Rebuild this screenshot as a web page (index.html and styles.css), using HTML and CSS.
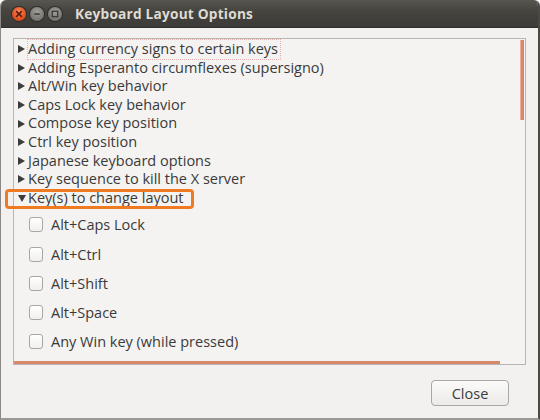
FILE: index.html
```html
<!DOCTYPE html>
<html>
<head>
<meta charset="utf-8">
<link rel="stylesheet" href="styles.css">
</head>
<body>
<div class="window">
  <div class="titlebar">
    <div class="wbtns">
      <span class="wbtn close"><svg width="14" height="14" viewBox="0 0 14 14"><path d="M4.6 4.6 L9.4 9.4 M9.4 4.6 L4.6 9.4" stroke="#5a1a0c" stroke-width="1.6" stroke-linecap="round"/></svg></span>
      <span class="wbtn min"><svg width="14" height="14" viewBox="0 0 14 14"><path d="M4.3 7 H9.7" stroke="#3a3935" stroke-width="1.6"/></svg></span>
      <span class="wbtn max"><svg width="14" height="14" viewBox="0 0 14 14"><rect x="4.3" y="4.3" width="5.4" height="5.4" fill="none" stroke="#3a3935" stroke-width="1.3"/></svg></span>
    </div>
    <div class="title">Keyboard Layout Options</div>
  </div>
  <div class="content">
    <div class="panel">
      <ul class="tree">
        <li class="row focus"><span class="tri"></span><span class="lbl">Adding currency signs to certain keys</span></li>
        <li class="row"><span class="tri"></span>Adding Esperanto circumflexes (supersigno)</li>
        <li class="row"><span class="tri"></span>Alt/Win key behavior</li>
        <li class="row"><span class="tri"></span>Caps Lock key behavior</li>
        <li class="row"><span class="tri"></span>Compose key position</li>
        <li class="row"><span class="tri"></span>Ctrl key position</li>
        <li class="row"><span class="tri"></span>Japanese keyboard options</li>
        <li class="row"><span class="tri"></span>Key sequence to kill the X server</li>
        <li class="row open"><span class="tri down"></span>Key(s) to change layout</li>
      </ul>
      <ul class="checks">
        <li class="check"><span class="box"></span>Alt+Caps Lock</li>
        <li class="check"><span class="box"></span>Alt+Ctrl</li>
        <li class="check"><span class="box"></span>Alt+Shift</li>
        <li class="check"><span class="box"></span>Alt+Space</li>
        <li class="check"><span class="box"></span>Any Win key (while pressed)</li>
      </ul>
      <div class="vscroll"></div>
      <div class="hscroll"></div>
      <div class="highlight"></div>
    </div>
    <div class="actions">
      <button class="btn">Close</button>
    </div>
  </div>
</div>
</body>
</html>
```
FILE: styles.css
```css
* { box-sizing: border-box; }
html, body { margin: 0; padding: 0; }
body {
  width: 540px;
  height: 420px;
  background: #ffffff;
  font-family: "Open Sans", "DejaVu Sans", sans-serif;
  overflow: hidden;
}
.window {
  width: 540px;
  height: 420px;
  background: #f2f1f0;
  border-left: 1px solid #8a8986;
  border-right: 2px solid #4a4944;
  border-bottom: 2px solid #9a9994;
  border-radius: 6px 6px 0 0;
  display: flex;
  flex-direction: column;
  overflow: hidden;
}
.titlebar {
  height: 28px;
  flex: none;
  background: linear-gradient(#57564f, #45443f 40%, #3c3b37);
  border-bottom: 1px solid #2f2e2a;
  display: flex;
  align-items: center;
  padding-left: 11px;
}
.wbtns { display: flex; gap: 4px; }
.wbtn {
  width: 14px;
  height: 14px;
  border-radius: 50%;
  display: flex;
  align-items: center;
  justify-content: center;
}
.wbtn svg { display: block; }
.close {
  background: radial-gradient(circle at 50% 35%, #f7895f, #e2521f 60%, #b9401a);
  box-shadow: 0 0 0 1px #2e2d2a;
}
.min, .max {
  background: radial-gradient(circle at 50% 35%, #a09e98, #7d7b75 60%, #65635e);
  box-shadow: 0 0 0 1px #2e2d2a;
}
.title {
  margin-left: 13px;
  color: #dfdbd2;
  font-weight: bold;
  font-size: 13.7px;
  letter-spacing: 0.2px;
}
.content {
  flex: 1;
  padding: 10px 12px 0 12px;
  display: flex;
  flex-direction: column;
}
.panel {
  position: relative;
  height: 327px;
  border: 1px solid #b8b6b2;
  background: #f4f3f1;
  padding: 1px 0 0 0;
  color: #3a3a3a;
  font-size: 14.5px;
}
.tree, .checks { list-style: none; margin: 0; padding: 0; }
.row {
  height: 18.6px;
  line-height: 18.6px;
  display: flex;
  align-items: center;
  padding-left: 4px;
  white-space: nowrap;
}
.tri {
  width: 0; height: 0;
  border-top: 4.5px solid transparent;
  border-bottom: 4.5px solid transparent;
  border-left: 7px solid #3c3c3c;
  margin-right: 3px;
}
.tri.down {
  border-left: 4.5px solid transparent;
  border-right: 4.5px solid transparent;
  border-top: 7px solid #3c3c3c;
  border-bottom: 0;
  margin-right: 2px;
}
.focus .lbl {
  outline: 1px dotted #e8b4b0;
  outline-offset: 0;
  padding-right: 2px;
}
.checks { margin-top: 3px; }
.check {
  height: 29.2px;
  display: flex;
  align-items: center;
  padding-left: 15px;
  white-space: nowrap;
}
.box {
  width: 14px;
  height: 15px;
  border: 1px solid #a9a7a3;
  border-radius: 3px;
  background: linear-gradient(#ffffff, #f0efed);
  margin-right: 8px;
}
.vscroll {
  position: absolute;
  right: 1px;
  top: 1px;
  width: 4px;
  height: 80px;
  background: #d9876a;
  border-left: 1px solid #e9b29e;
}
.hscroll {
  position: absolute;
  left: 0;
  bottom: 0;
  width: 486px;
  height: 3px;
  background: #d9876a;
}
.highlight {
  position: absolute;
  left: -9px;
  top: 150px;
  width: 189px;
  height: 20px;
  border: 3px solid #f07a22;
  border-radius: 4px;
}
.actions {
  display: flex;
  justify-content: flex-end;
  padding-top: 15px;
  padding-right: 17px;
}
.btn {
  width: 78px;
  height: 26px;
  border: 1px solid #a9a7a3;
  border-radius: 4px;
  background: linear-gradient(#fbfbfa, #ebeae8);
  font-family: inherit;
  font-size: 14.5px;
  color: #3c3c3c;
  padding: 0;
}
```
